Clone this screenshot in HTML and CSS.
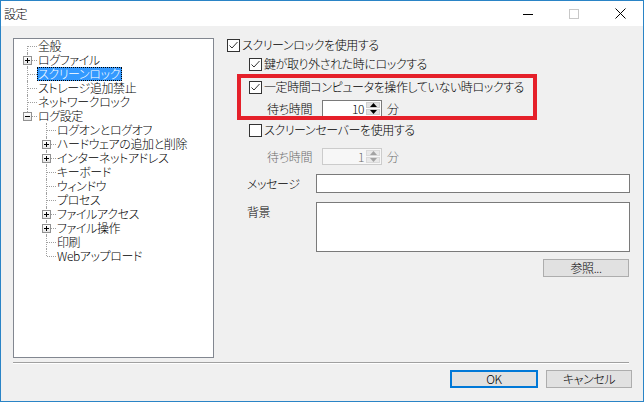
FILE: index.html
```html
<!DOCTYPE html>
<html lang="ja">
<head>
<meta charset="utf-8">
<title>設定</title>
<link rel="stylesheet" href="styles.css">
</head>
<body>
<div class="window">
  <div class="titlebar">
    <span class="title">設定</span>
    <div class="caption-buttons">
      <span class="cap-btn"><svg width="10" height="10" viewBox="0 0 10 10"><path d="M0 5.5H10" stroke="#000" stroke-width="1"/></svg></span>
      <span class="cap-btn"><svg width="10" height="10" viewBox="0 0 10 10"><rect x="0.5" y="0.5" width="9" height="9" fill="none" stroke="#c8c8c8"/></svg></span>
      <span class="cap-btn"><svg width="11" height="11" viewBox="0 0 11 11"><path d="M0.5 0.5L10.5 10.5M10.5 0.5L0.5 10.5" stroke="#000" stroke-width="1"/></svg></span>
    </div>
  </div>
  <div class="client">
    <div class="main">
      <div class="tree">
        <div class="row"><span class="cell first"></span><span class="label">全般</span></div>
        <div class="row"><span class="cell mid"><i class="exp"><svg width="9" height="9" viewBox="0 0 9 9"><path d="M2 4.5H7M4.5 2V7" stroke="#000"/></svg></i></span><span class="label">ログファイル</span></div>
        <div class="row"><span class="cell mid"></span><span class="label selected">スクリーンロック</span></div>
        <div class="row"><span class="cell mid"></span><span class="label">ストレージ追加禁止</span></div>
        <div class="row"><span class="cell mid"></span><span class="label">ネットワークロック</span></div>
        <div class="row"><span class="cell last"><i class="exp"><svg width="9" height="9" viewBox="0 0 9 9"><path d="M2 4.5H7" stroke="#000"/></svg></i></span><span class="label">ログ設定</span></div>
        <div class="row"><span class="cell blank"></span><span class="cell mid"></span><span class="label">ログオンとログオフ</span></div>
        <div class="row"><span class="cell blank"></span><span class="cell mid"><i class="exp"><svg width="9" height="9" viewBox="0 0 9 9"><path d="M2 4.5H7M4.5 2V7" stroke="#000"/></svg></i></span><span class="label">ハードウェアの追加と削除</span></div>
        <div class="row"><span class="cell blank"></span><span class="cell mid"><i class="exp"><svg width="9" height="9" viewBox="0 0 9 9"><path d="M2 4.5H7M4.5 2V7" stroke="#000"/></svg></i></span><span class="label">インターネットアドレス</span></div>
        <div class="row"><span class="cell blank"></span><span class="cell mid"></span><span class="label">キーボード</span></div>
        <div class="row"><span class="cell blank"></span><span class="cell mid"></span><span class="label">ウィンドウ</span></div>
        <div class="row"><span class="cell blank"></span><span class="cell mid"></span><span class="label">プロセス</span></div>
        <div class="row"><span class="cell blank"></span><span class="cell mid"><i class="exp"><svg width="9" height="9" viewBox="0 0 9 9"><path d="M2 4.5H7M4.5 2V7" stroke="#000"/></svg></i></span><span class="label">ファイルアクセス</span></div>
        <div class="row"><span class="cell blank"></span><span class="cell mid"><i class="exp"><svg width="9" height="9" viewBox="0 0 9 9"><path d="M2 4.5H7M4.5 2V7" stroke="#000"/></svg></i></span><span class="label">ファイル操作</span></div>
        <div class="row"><span class="cell blank"></span><span class="cell mid"></span><span class="label">印刷</span></div>
        <div class="row"><span class="cell blank"></span><span class="cell last"></span><span class="label">Webアップロード</span></div>
      </div>
      <div class="panel">
        <label class="check r1"><svg class="cb" width="13" height="13" viewBox="0 0 13 13"><rect x="0.5" y="0.5" width="12" height="12" fill="#fff" stroke="#333"/><path d="M2.5 6.5L5 9L10.5 3" fill="none" stroke="#333"/></svg><span class="txt">スクリーンロックを使用する</span></label>
        <label class="check indent r2"><svg class="cb" width="13" height="13" viewBox="0 0 13 13"><rect x="0.5" y="0.5" width="12" height="12" fill="#fff" stroke="#333"/><path d="M2.5 6.5L5 9L10.5 3" fill="none" stroke="#333"/></svg><span class="txt">鍵が取り外された時にロックする</span></label>
        <label class="check indent r3"><svg class="cb" width="13" height="13" viewBox="0 0 13 13"><rect x="0.5" y="0.5" width="12" height="12" fill="#fff" stroke="#333"/><path d="M2.5 6.5L5 9L10.5 3" fill="none" stroke="#333"/></svg><span class="txt">一定時間コンピュータを操作していない時ロックする</span></label>
        <div class="spin-row r4">
          <span class="spin-label">待ち時間</span>
          <span class="spin">
            <span class="spin-val">10</span>
            <span class="spin-btns">
              <span class="spin-b"><svg width="7" height="4" viewBox="0 0 7 4"><path d="M0 4L3.5 0L7 4Z" fill="#000"/></svg></span>
              <span class="spin-b"><svg width="7" height="4" viewBox="0 0 7 4"><path d="M0 0L3.5 4L7 0Z" fill="#000"/></svg></span>
            </span>
          </span>
          <span class="unit">分</span>
        </div>
        <label class="check indent r5"><svg class="cb" width="13" height="13" viewBox="0 0 13 13"><rect x="0.5" y="0.5" width="12" height="12" fill="#fff" stroke="#333"/></svg><span class="txt">スクリーンセーバーを使用する</span></label>
        <div class="spin-row disabled r6">
          <span class="spin-label">待ち時間</span>
          <span class="spin">
            <span class="spin-val">1</span>
            <span class="spin-btns">
              <span class="spin-b"><svg width="7" height="4" viewBox="0 0 7 4"><path d="M0 4L3.5 0L7 4Z" fill="#a3a3a3"/></svg></span>
              <span class="spin-b"><svg width="7" height="4" viewBox="0 0 7 4"><path d="M0 0L3.5 4L7 0Z" fill="#a3a3a3"/></svg></span>
            </span>
          </span>
          <span class="unit">分</span>
        </div>
        <div class="field r7"><span class="field-label">メッセージ</span><span class="input"></span></div>
        <div class="field r8"><span class="field-label">背景</span><span class="input area"></span></div>
        <div class="browse-row"><span class="btn browse">参照...</span></div>
        <div class="annotation"></div>
      </div>
    </div>
    <div class="separator"></div>
    <div class="footer">
      <span class="btn btn-ok">OK</span>
      <span class="btn btn-cancel">キャンセル</span>
    </div>
  </div>
</div>
</body>
</html>
```

FILE: styles.css
```css
* { box-sizing: border-box; }
html, body { margin: 0; padding: 0; }
body {
  width: 644px;
  height: 402px;
  font-family: "Noto Sans CJK JP", "Noto Sans", sans-serif;
  font-size: 12px;
  font-weight: 300;
  font-feature-settings: "palt";
  letter-spacing: -0.4px;
  color: #000;
  overflow: hidden;
}
.window {
  width: 644px;
  height: 402px;
  border: 1px solid #2a84c6;
  display: flex;
  flex-direction: column;
  background: #f0f0f0;
}
.titlebar {
  height: 25px;
  flex: none;
  background: #fff;
  display: flex;
  align-items: center;
}
.title {
  padding-left: 3px;
  line-height: 25px;
  flex: 1;
}
.caption-buttons { display: flex; height: 25px; }
.cap-btn {
  width: 46px;
  height: 25px;
  display: flex;
  align-items: center;
  justify-content: center;
}
.client {
  flex: 1;
  display: flex;
  flex-direction: column;
  padding: 12px 0 0 12px;
}
.main {
  display: flex;
  height: 320px;
  flex: none;
}
.tree {
  width: 201px;
  height: 320px;
  flex: none;
  background: #fff;
  border: 1px solid #828790;
  padding: 0 0 0 4px;
}
.row {
  display: flex;
  height: 14px;
  line-height: 14px;
  white-space: nowrap;
}
.cell {
  position: relative;
  width: 19px;
  height: 14px;
  flex: none;
}
.cell::before {
  content: "";
  position: absolute;
  left: 9px;
  top: 0;
  bottom: 0;
  border-left: 1px dotted #a0a0a0;
}
.cell::after {
  content: "";
  position: absolute;
  left: 10px;
  top: 7px;
  width: 9px;
  border-top: 1px dotted #a0a0a0;
}
.cell.first::before { top: 7px; }
.cell.last::before { bottom: 7px; }
.cell.blank::before, .cell.blank::after { display: none; }
.exp {
  position: absolute;
  left: 5px;
  top: 3px;
  width: 9px;
  height: 9px;
  border: 1px solid #919191;
  background: linear-gradient(#fff, #e6e6e6);
  z-index: 1;
  display: block;
}
.exp svg { position: absolute; left: -1px; top: -1px; }
.label {
  padding: 0 1px;
  height: 14px;
}
.label.selected {
  background: #3399ff;
  color: #fff;
  outline: 1px dotted #000;
  outline-offset: -1px;
  padding: 0 2px 0 1px;
}
.panel {
  flex: 1;
  position: relative;
  margin-left: 13px;
  padding-right: 13px;
  display: flex;
  flex-direction: column;
}
.check {
  display: flex;
  align-items: center;
  height: 14px;
  line-height: 14px;
  white-space: nowrap;
}
.check .cb { flex: none; }
.check .txt { margin-left: 2px; }
.indent { padding-left: 22px; }
.r2 { margin-top: 5px; }
.r3 { margin-top: 9px; }
.r4 { margin-top: 6px; }
.r5 { margin-top: 6px; }
.r6 { margin-top: 11px; }
.r7 { margin-top: 9px; }
.r8 { margin-top: 9px; }
.spin-row {
  display: flex;
  align-items: center;
  height: 17px;
  padding-left: 40px;
  white-space: nowrap;
}
.spin-label { width: 55px; flex: none; }
.spin {
  width: 60px;
  height: 17px;
  border: 1px solid #7a7a7a;
  background: #fff;
  display: flex;
  flex: none;
}
.spin-val {
  flex: 1;
  text-align: right;
  line-height: 15px;
  padding-right: 1px;
}
.spin-btns {
  width: 16px;
  display: flex;
  flex-direction: column;
  padding: 1px;
  gap: 1px;
  background: #fff;
}
.spin-b {
  flex: 1;
  background: #e2e2e2;
  border: 1px solid #cfcfcf;
  display: flex;
  align-items: center;
  justify-content: center;
}
.unit { margin-left: 5px; }
.disabled { color: #6d6d6d; }
.disabled .spin { border-color: #cccccc; background: #f7f7f7; }
.disabled .spin-btns { background: #f7f7f7; }
.disabled .spin-b { background: #e9e9e9; border-color: #dadada; }
.field {
  display: flex;
  padding-left: 20px;
  white-space: nowrap;
}
.field-label { width: 69px; flex: none; line-height: 19px; }
.r8 .field-label { line-height: 20px; }
.input {
  flex: 1;
  height: 19px;
  border: 1px solid #7a7a7a;
  background: #fff;
}
.input.area { height: 50px; }
.browse-row {
  display: flex;
  justify-content: flex-end;
  margin-top: 7px;
  padding-right: 1px;
}
.btn {
  display: flex;
  align-items: center;
  justify-content: center;
  height: 18px;
  background: #e1e1e1;
  border: 1px solid #adadad;
  line-height: 16px;
  white-space: nowrap;
}
.browse { width: 86px; }
.annotation {
  position: absolute;
  left: 10px;
  top: 36px;
  width: 300px;
  height: 46px;
  border: 4px solid #e5202a;
}
.separator {
  margin: 4px 14px 0 0;
  height: 2px;
  border-top: 1px solid #a0a0a0;
  border-bottom: 1px solid #fff;
}
.footer {
  display: flex;
  justify-content: flex-end;
  margin-top: 6px;
  padding-right: 11px;
}
.btn-ok {
  width: 88px;
  border: 2px solid #0078d7;
  margin-right: 8px;
}
.btn-cancel { width: 86px; }
```
